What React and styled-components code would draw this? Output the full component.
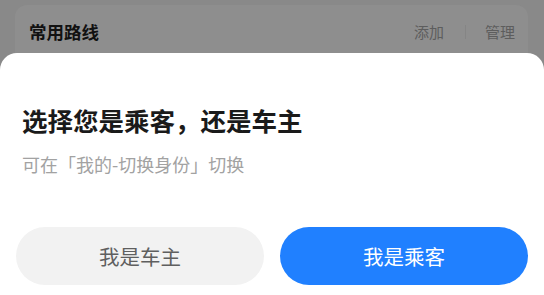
import React from "react";
import styled, { createGlobalStyle } from "styled-components";

const Global = createGlobalStyle`
  html, body { margin: 0; padding: 0; }
  body { font-family: "Noto Sans CJK SC", "Noto Sans", sans-serif; }
  * { box-sizing: border-box; }
`;

const Screen = styled.div`
  position: relative;
  width: 544px;
  height: 295px;
  overflow: hidden;
  background: #898989;
  padding: 5px 16px 0 15px;
`;

const RouteCard = styled.div`
  height: 80px;
  background: #8e8e8e;
  border-radius: 12px;
  display: flex;
  align-items: flex-start;
  justify-content: space-between;
  padding: 15px 13px 0 14px;
`;

const CardTitle = styled.div`
  font-size: 17.5px;
  font-weight: 700;
  line-height: 24px;
  color: #111;
`;

const Actions = styled.div`
  display: flex;
  align-items: center;
  margin-top: 1px;
`;

const Action = styled.span`
  font-size: 15px;
  line-height: 22px;
  color: #5d5d5d;
`;

const Divider = styled.span`
  width: 1px;
  height: 14px;
  background: #858585;
  margin: 0 19px 0 21px;
`;

const Sheet = styled.div`
  position: absolute;
  left: 0;
  right: 0;
  top: 53px;
  bottom: 0;
  background: #fff;
  border-radius: 17px 17px 0 0;
  padding: 49px 16px 0 16px;
  display: flex;
  flex-direction: column;
`;

const Title = styled.div`
  font-size: 25.5px;
  font-weight: 700;
  line-height: 36px;
  color: #1a1a1a;
  padding-left: 6px;
`;

const Subtitle = styled.div`
  margin-top: 13px;
  font-size: 18px;
  line-height: 26px;
  color: #a2a2a2;
  padding-left: 6px;
`;

const Buttons = styled.div`
  margin-top: 50px;
  display: grid;
  grid-template-columns: 1fr 1fr;
  gap: 16px;
`;

const Choice = styled.button`
  height: 58px;
  border: none;
  border-radius: 29px;
  font-family: inherit;
  font-size: 20.5px;
  background: ${(p) => (p.$primary ? "#2080ff" : "#f2f2f2")};
  color: ${(p) => (p.$primary ? "#fff" : "#5f5f5f")};
  display: flex;
  align-items: center;
  justify-content: center;
  padding: 0;
`;

export default function App() {
  return (
    <>
      <Global />
      <Screen>
        <RouteCard>
          <CardTitle>常用路线</CardTitle>
          <Actions>
            <Action>添加</Action>
            <Divider />
            <Action>管理</Action>
          </Actions>
        </RouteCard>
        <Sheet>
          <Title>选择您是乘客，还是车主</Title>
          <Subtitle>可在「我的-切换身份」切换</Subtitle>
          <Buttons>
            <Choice>我是车主</Choice>
            <Choice $primary>我是乘客</Choice>
          </Buttons>
        </Sheet>
      </Screen>
    </>
  );
}
